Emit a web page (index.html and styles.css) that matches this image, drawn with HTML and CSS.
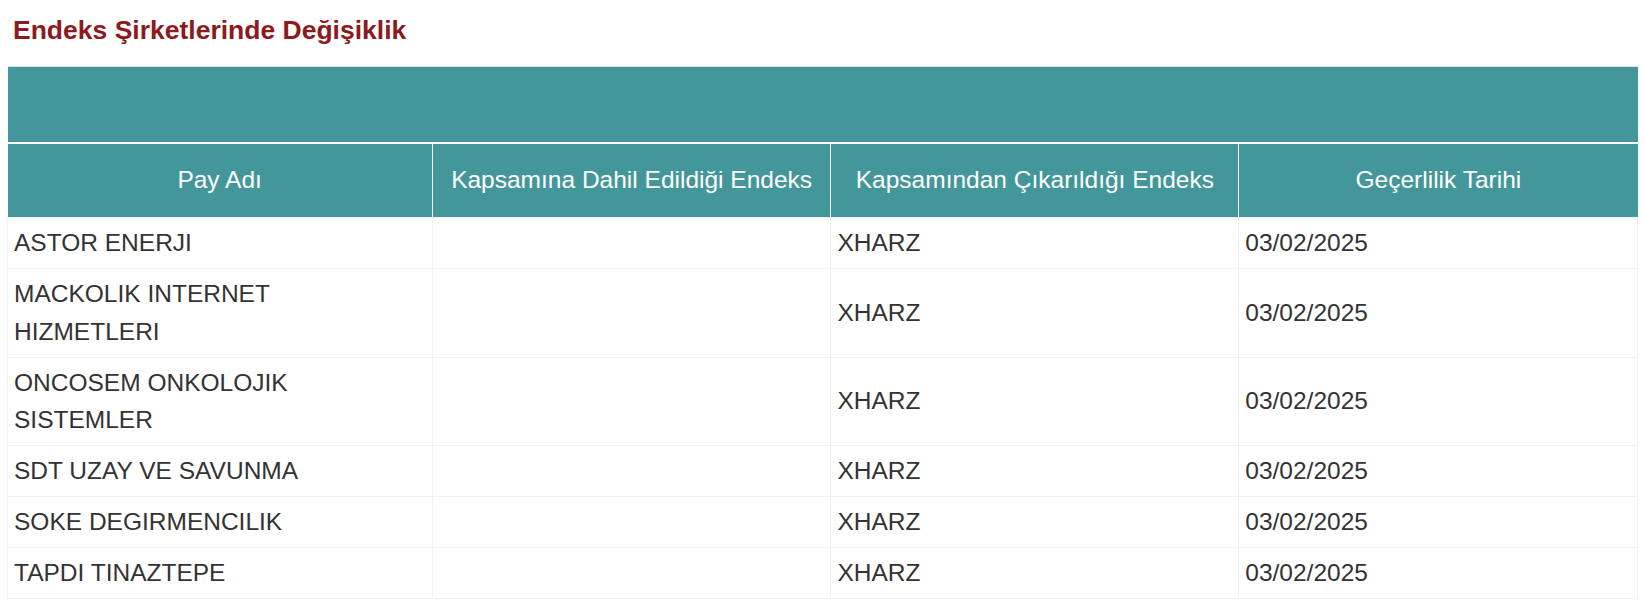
FILE: index.html
```html
<!DOCTYPE html>
<html lang="tr">
<head>
<meta charset="utf-8">
<title>Endeks Şirketlerinde Değişiklik</title>
<link rel="stylesheet" href="styles.css">
</head>
<body>
<div class="page">
  <h3 class="title">Endeks Şirketlerinde Değişiklik</h3>
  <table class="grid">
    <colgroup>
      <col class="c1"><col class="c2"><col class="c3"><col class="c4">
    </colgroup>
    <thead>
      <tr class="band"><th colspan="4"></th></tr>
      <tr class="heads">
        <th>Pay Adı</th>
        <th>Kapsamına Dahil Edildiği Endeks</th>
        <th>Kapsamından Çıkarıldığı Endeks</th>
        <th>Geçerlilik Tarihi</th>
      </tr>
    </thead>
    <tbody>
      <tr><td>ASTOR ENERJI</td><td></td><td>XHARZ</td><td>03/02/2025</td></tr>
      <tr><td>MACKOLIK INTERNET HIZMETLERI</td><td></td><td>XHARZ</td><td>03/02/2025</td></tr>
      <tr><td>ONCOSEM ONKOLOJIK SISTEMLER</td><td></td><td>XHARZ</td><td>03/02/2025</td></tr>
      <tr><td>SDT UZAY VE SAVUNMA</td><td></td><td>XHARZ</td><td>03/02/2025</td></tr>
      <tr><td>SOKE DEGIRMENCILIK</td><td></td><td>XHARZ</td><td>03/02/2025</td></tr>
      <tr><td>TAPDI TINAZTEPE</td><td></td><td>XHARZ</td><td>03/02/2025</td></tr>
    </tbody>
  </table>
</div>
</body>
</html>
```
FILE: styles.css
```css
html, body {
  margin: 0;
  padding: 0;
  background: #ffffff;
}

body {
  font-family: "Liberation Sans", Arial, sans-serif;
  color: #333333;
}

.page {
  padding: 0 7px;
}

.title {
  margin: 0;
  padding: 15px 6px 21px;
  font-size: 26.5px;
  line-height: 30px;
  font-weight: bold;
  color: #8c1a1e;
}

.grid {
  width: 100%;
  table-layout: fixed;
  border-collapse: collapse;
  border-top: 1px solid #cfe4e5;
}

.c1 { width: 26.06%; }
.c2 { width: 24.46%; }
.c3 { width: 25.02%; }
.c4 { width: 24.46%; }

.band th {
  height: 75px;
  padding: 0;
  background: #43979a;
  border-bottom: 2px solid #ffffff;
}

.heads th {
  background: #43979a;
  color: #ffffff;
  font-weight: normal;
  font-size: 24.5px;
  line-height: 38px;
  padding: 17px 6px 18px;
  text-align: center;
  border-left: 1px solid #ffffff;
  border-right: 1px solid #ffffff;
}

.heads th:first-child { border-left: 0; }
.heads th:last-child { border-right: 0; }

.grid td {
  font-size: 24.5px;
  line-height: 37.85px;
  padding: 6px;
  vertical-align: middle;
  border: 1px solid #f1f1f1;
}

.grid td:first-child {
  padding-right: 24px;
}
```
